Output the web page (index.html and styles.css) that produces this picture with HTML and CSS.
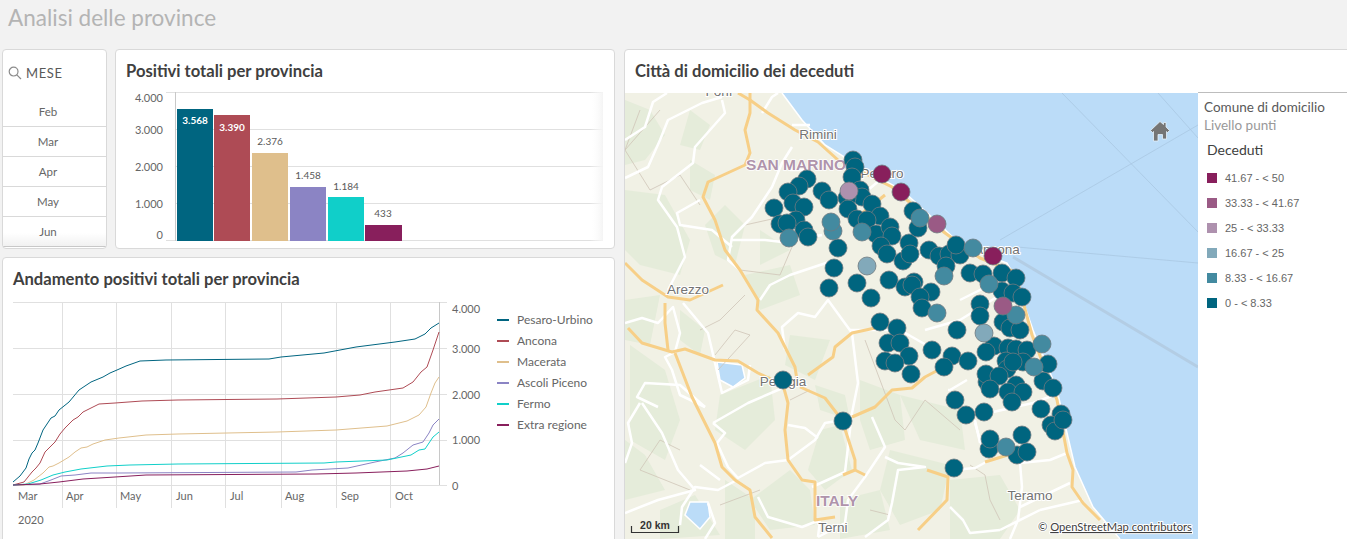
FILE: index.html
```html
<!DOCTYPE html>
<html lang="it">
<head>
<meta charset="utf-8">
<title>Analisi delle province</title>
<link rel="stylesheet" href="styles.css">
</head>
<body>
<header class="topbar"><h1>Analisi delle province</h1></header>
<main class="sheet">
  <div class="left">
    <div class="toprow">
      <section class="card filter">
        <div class="filter-head">
          <svg class="search" viewBox="0 0 14 14"><circle cx="5.6" cy="5.6" r="4.4"/><path d="M8.8 8.8 13 13"/></svg>
          <span>MESE</span>
        </div>
        <ul class="filter-list">
          <li>Feb</li><li>Mar</li><li>Apr</li><li>May</li><li>Jun</li>
        </ul>
      </section>
      <section class="card bars">
        <h2 class="card-title">Positivi totali per provincia</h2>
        <svg class="bar-svg" viewBox="116 92 498 155">
          <defs><linearGradient id="fade"><stop offset="0" stop-color="#fff" stop-opacity="0"/><stop offset="1" stop-color="#f4f4f4"/></linearGradient></defs>
          <g class="grid">
            <path d="M166 92.500H603M176 129.500H603M176 166.500H603M176 203.500H603M166 240.500H603"/>
            <path class="axis" d="M175.500 92V241"/>
          </g>
          <rect x="590" y="92" width="13" height="149" fill="url(#fade)"/>
          <g class="tick">
            <text x="163" y="102">4.000</text><text x="163" y="134">3.000</text><text x="163" y="171">2.000</text><text x="163" y="208">1.000</text><text x="163" y="239">0</text>
          </g>
          <rect class="c1" x="177" y="109" width="36" height="132"/>
          <rect class="c2" x="214" y="115" width="36" height="126"/>
          <rect class="c3" x="252" y="153" width="36" height="88"/>
          <rect class="c4" x="290" y="187" width="36" height="54"/>
          <rect class="c5" x="328" y="197" width="36" height="44"/>
          <rect class="c6" x="365" y="225" width="37" height="16"/>
          <g class="val">
            <text class="in" x="195" y="124">3.568</text><text class="in" x="232" y="131">3.390</text>
            <text x="270" y="145">2.376</text><text x="308" y="179">1.458</text><text x="346" y="190">1.184</text><text x="383" y="217">433</text>
          </g>
        </svg>
      </section>
    </div>
    <section class="card trend">
      <h2 class="card-title trend-title">Andamento positivi totali per provincia</h2>
      <div class="trend-body">
        <svg class="line-svg" viewBox="3 300 490 238">
          <g class="grid">
            <path d="M13 302.500H447M13 348.500H447M13 394.500H447M13 440.500H447M13 485.500H447"/>
            <path d="M62.500 302V508M116.500 302V508M171.500 302V508M225.500 302V508M281.500 302V508M336.500 302V508M390.500 302V508"/>
            <path class="axis" d="M439.500 302V485"/>
          </g>
          <g class="series">
            <path class="s1" d="M13 482 20 476 26 468 29 459 32 453 35 450 38 443 43 430 47 424 51 418 55 416 59 410 64 406 69 402 74 396 79 390 91 382 103 377 110 373 117 370 126 366 140 361 166 360 269 359 281 357 324 353 356 347 395 342 415 339 425 334 431 328 439 323"/>
            <path class="s2" d="M13 485 24 482 32 472 36 468 40 463 45 452 50 447 55 442 60 434 65 428 73 420 78 417 83 412 99 404 115 403 142 401 178 400 277 399 336 397 360 395 375 392 403 388 413 382 421 372 427 367 433 350 439 332"/>
            <path class="s3" d="M13 485 24 485 34 480 43 473 49 467 53 466 59 463 69 457 75 452 81 448 87 447 93 444 105 440 119 438 146 435 178 434 277 432 336 430 387 426 407 421 419 415 426 407 431 393 435 383 439 377"/>
            <path class="s4" d="M13 485 40 484 51 480 61 476 75 475 91 473 119 473 296 472 312 470 348 468 375 462 395 458 403 453 413 445 423 442 429 433 433 425 439 419"/>
            <path class="s5" d="M13 485 28 484 41 480 53 475 65 472 81 469 107 466 130 465 178 464 324 463 336 462 387 460 411 455 419 450 425 449 433 437 439 432"/>
            <path class="s6" d="M13 485 40 484 59 482 83 479 115 477 146 475 316 474 356 473 407 471 427 469 439 466"/>
          </g>
          <g class="tick start">
            <text x="452" y="313">4.000</text><text x="452" y="353">3.000</text><text x="452" y="399">2.000</text><text x="452" y="444">1.000</text><text x="452" y="490">0</text>
          </g>
          <g class="tick start">
            <text x="18" y="500">Mar</text><text x="66" y="500">Apr</text><text x="120" y="500">May</text><text x="176" y="500">Jun</text><text x="230" y="500">Jul</text><text x="285" y="500">Aug</text><text x="341" y="500">Sep</text><text x="395" y="500">Oct</text>
            <text x="18" y="524">2020</text>
          </g>
        </svg>
        <ul class="line-legend">
          <li><i class="sw b1"></i>Pesaro-Urbino</li>
          <li><i class="sw b2"></i>Ancona</li>
          <li><i class="sw b3"></i>Macerata</li>
          <li><i class="sw b4"></i>Ascoli Piceno</li>
          <li><i class="sw b5"></i>Fermo</li>
          <li><i class="sw b6"></i>Extra regione</li>
        </ul>
      </div>
    </section>
  </div>
  <section class="card mapcard">
    <h2 class="card-title map-title">Città di domicilio dei deceduti</h2>
    <div class="map-body">
      <div class="map-wrap">
        <svg class="map" viewBox="625 93 573 446">
          <rect class="land" x="625" y="93" width="573" height="446"/>
          <g class="green">
            <path d="M625 100 650 110 665 135 645 160 625 165Z"/>
            <path d="M625 190 665 195 690 240 680 275 640 265 625 250Z"/>
            <path d="M690 110 710 125 700 150 680 145Z"/>
            <path d="M725 205 745 225 735 265 715 255 705 225Z"/>
            <path d="M745 275 790 265 800 295 760 310Z"/>
            <path d="M625 300 660 295 650 345 625 340Z"/>
            <path d="M630 345 665 370 680 420 665 460 630 440Z"/>
            <path d="M625 440 645 455 665 490 625 500Z"/>
            <path d="M680 310 705 330 700 355 680 340Z"/>
            <path d="M720 395 770 375 775 420 745 450 715 430Z"/>
            <path d="M790 335 830 340 815 380 785 365Z"/>
            <path d="M815 385 845 395 850 420 820 410Z"/>
            <path d="M820 430 840 425 852 470 825 490 808 470Z"/>
            <path d="M790 470 810 490 815 525 770 530 750 500Z"/>
            <path d="M660 510 695 495 720 535 660 539Z"/>
            <path d="M725 480 755 500 755 539 725 539Z"/>
            <path d="M860 380 900 395 905 440 870 450 860 420Z"/>
            <path d="M890 450 950 465 940 510 900 525 880 490Z"/>
            <path d="M950 480 1000 475 1020 510 1000 539 950 539Z"/>
            <path d="M840 500 880 490 890 530 840 539Z"/>
            <path d="M900 395 960 410 965 450 920 440Z"/>
            <path d="M690 160 715 175 710 200 690 190Z"/>
            <path d="M760 230 790 250 760 265Z"/>
          </g>
          <path class="sea" d="M782 93 802 120 825 145 865 170 902 190 935 220 958 242 980 253 1007 263 1017 280 1025 307 1033 330 1057 390 1067 433 1075 467 1093 507 1120 539H1198V93Z"/>
          <path class="coast" d="M782 93 802 120 825 145 865 170 902 190 935 220 958 242 980 253 1007 263 1017 280 1025 307 1033 330 1057 390 1067 433 1075 467 1093 507 1120 539"/>
          <path class="lane" d="M1062 93 1198 232M1158 93 1198 138M1000 240 1198 125M1017 247 1198 263"/>
          <path class="lane dbl" d="M1013 257 1198 367"/>
          <path class="lake" d="M717 362 742 365 745 378 733 387 720 380Z"/>
          <path class="lake" d="M685 515 690 502 708 502 710 517 700 529Z"/>
          <path class="border" d="M625 150 640 110M660 110 625 150 650 190 680 175 700 205M745 225 790 215 815 235M740 270 780 275 795 240M718 370 750 335 735 330 715 355M745 295 720 320 700 330M810 390 790 400M865 340 895 420 905 430 925 400 960 430M970 465 985 475 990 500 1000 520M680 450 660 440 640 470 690 490M760 490 720 505M870 510 890 515"/>
          <g class="wroad">
            <path d="M625 140 645 127 653 102 667 93M625 178 648 167 660 140 668 120 702 103 722 97"/>
            <path d="M722 100 725 113 695 147 693 163 662 187 658 200 677 227 685 257 668 290"/>
            <path d="M700 200 677 213 680 225 712 230 732 247M792 147 782 163 772 187 752 217 732 237 728 260 740 270"/>
            <path d="M732 240 765 240 782 242 822 235M762 113 772 97 778 93M792 125 810 125M835 260 790 275 770 285 760 300"/>
            <path d="M625 323 642 318 658 323 673 307 680 333 675 352 665 357 672 370 680 395 705 407"/>
            <path d="M683 303 708 333 715 363 722 393 748 380 750 365M713 423 748 403 785 387"/>
            <path d="M705 407 680 385 645 383 637 397 658 407M640 403 628 423 632 443 625 463"/>
            <path d="M642 403 662 433 678 470 695 490 658 500 625 513"/>
            <path d="M713 423 725 433 717 443 728 467 738 478 765 463 788 460 815 440 825 423 842 420"/>
            <path d="M788 425 805 428 818 438M737 480 718 490 695 487 682 507 680 525M708 503 715 523 705 539"/>
            <path d="M758 497 768 517 802 527 820 520 818 537M812 487 845 472 852 413 858 383 852 333 828 300 815 317 798 313 782 327 785 350"/>
            <path d="M872 417 885 447 865 477 848 500 845 523 818 537M885 457 898 463 925 467 898 470 892 503 888 520 865 537"/>
            <path d="M953 470 975 468 990 460M975 423 985 457M950 507 963 520 970 533 1000 530"/>
            <path d="M1067 453 1050 460 1020 463 1022 487 1018 520 1010 539M1020 507 1070 483M1040 510 1083 500M1000 530 1040 510"/>
            <path d="M975 420 980 443M993 412 1033 403 1060 393M967 380 950 390 948 390M960 300 1000 280M790 170 810 170M880 180 850 205M700 465 720 480"/>
            <path d="M925 330 960 320 1000 295M900 270 930 250M850 330 900 330 935 350"/>
          </g>
          <g class="yroad">
            <path d="M738 93 750 100 768 113 795 130 818 142 838 160 892 187 945 233 980 258 1015 272 1032 335 1057 400 1067 453 1073 470 1072 487 1083 503 1100 520"/>
            <path d="M750 93 750 113 745 130 750 153 745 165 708 182 703 197 715 220 725 250 740 270 758 300 757 310 778 333 795 367 797 380"/>
            <path d="M628 328 642 343 672 352 685 349 715 360 738 361 758 373 783 385 788 403 785 430 788 460 802 480 815 482 815 520 835 517"/>
            <path d="M800 387 825 398 842 420 855 460 855 470 865 475M855 470 843 475"/>
            <path d="M808 375 833 357 835 347 852 333 875 328M852 417 875 407 892 390 912 388 925 377 942 368"/>
            <path d="M675 353 692 397 715 443 722 467 735 480 750 490 755 517 772 538"/>
            <path d="M927 470 948 477 947 500 918 530M665 303 665 323 668 350M625 263 642 280 668 297 690 300 723 285M1024 450 985 462"/>
            <path d="M860 215 885 195"/>
          </g>
          <g class="place">
            <text x="719" y="96">Forlì</text>
            <text x="818" y="139">Rimini</text>
            <text x="882" y="178">Pesaro</text>
            <text x="997" y="254">Ancona</text>
            <text x="688" y="294">Arezzo</text>
            <text x="783" y="386">Perugia</text>
            <text x="833" y="532">Terni</text>
            <text x="1030" y="500">Teramo</text>
          </g>
          <g class="country">
            <text x="796" y="170">SAN MARINO</text>
            <text x="837" y="506">ITALY</text>
          </g>
          <g class="dots k1">
            <circle cx="853" cy="160" r="9"/><circle cx="855" cy="167" r="9"/><circle cx="807" cy="179" r="9"/><circle cx="799" cy="186" r="9"/><circle cx="788" cy="192" r="9"/><circle cx="793" cy="203" r="9"/><circle cx="804" cy="207" r="9"/><circle cx="822" cy="191" r="9"/><circle cx="829" cy="200" r="9"/><circle cx="774" cy="208" r="9"/><circle cx="796" cy="220" r="9"/><circle cx="780" cy="224" r="9"/><circle cx="787" cy="223" r="9"/><circle cx="804" cy="230" r="9"/><circle cx="808" cy="237" r="9"/><circle cx="852" cy="177" r="9"/><circle cx="860" cy="190" r="9"/><circle cx="862" cy="197" r="9"/><circle cx="847" cy="198" r="9"/><circle cx="848" cy="209" r="9"/><circle cx="872" cy="204" r="9"/><circle cx="880" cy="216" r="9"/><circle cx="857" cy="219" r="9"/><circle cx="867" cy="220" r="9"/><circle cx="876" cy="234" r="9"/><circle cx="890" cy="227" r="9"/><circle cx="892" cy="236" r="9"/><circle cx="881" cy="246" r="9"/><circle cx="887" cy="254" r="9"/><circle cx="903" cy="261" r="9"/><circle cx="909" cy="243" r="9"/><circle cx="910" cy="254" r="9"/><circle cx="913" cy="211" r="9"/><circle cx="918" cy="228" r="9"/><circle cx="929" cy="250" r="9"/><circle cx="939" cy="256" r="9"/><circle cx="949" cy="254" r="9"/><circle cx="960" cy="255" r="9"/><circle cx="956" cy="245" r="9"/><circle cx="946" cy="266" r="9"/><circle cx="838" cy="248" r="9"/><circle cx="834" cy="268" r="9"/><circle cx="829" cy="288" r="9"/><circle cx="857" cy="283" r="9"/><circle cx="889" cy="280" r="9"/><circle cx="871" cy="298" r="9"/><circle cx="905" cy="287" r="9"/><circle cx="914" cy="282" r="9"/><circle cx="912" cy="285" r="9"/><circle cx="931" cy="292" r="9"/><circle cx="920" cy="297" r="9"/><circle cx="922" cy="308" r="9"/><circle cx="970" cy="273" r="9"/><circle cx="983" cy="274" r="9"/><circle cx="1002" cy="273" r="9"/><circle cx="1016" cy="278" r="9"/><circle cx="1002" cy="291" r="9"/><circle cx="1013" cy="293" r="9"/><circle cx="1022" cy="297" r="9"/><circle cx="980" cy="304" r="9"/><circle cx="980" cy="316" r="9"/><circle cx="1003" cy="322" r="9"/><circle cx="1010" cy="328" r="9"/><circle cx="1020" cy="330" r="9"/><circle cx="957" cy="330" r="9"/><circle cx="880" cy="322" r="9"/><circle cx="897" cy="328" r="9"/><circle cx="888" cy="343" r="9"/><circle cx="900" cy="343" r="9"/><circle cx="909" cy="356" r="9"/><circle cx="885" cy="361" r="9"/><circle cx="895" cy="363" r="9"/><circle cx="911" cy="374" r="9"/><circle cx="932" cy="350" r="9"/><circle cx="952" cy="356" r="9"/><circle cx="944" cy="367" r="9"/><circle cx="968" cy="361" r="9"/><circle cx="994" cy="346" r="9"/><circle cx="986" cy="352" r="9"/><circle cx="1008" cy="348" r="9"/><circle cx="1016" cy="349" r="9"/><circle cx="1027" cy="350" r="9"/><circle cx="1006" cy="361" r="9"/><circle cx="1023" cy="362" r="9"/><circle cx="1007" cy="369" r="9"/><circle cx="1013" cy="362" r="9"/><circle cx="1048" cy="364" r="9"/><circle cx="987" cy="382" r="9"/><circle cx="986" cy="374" r="9"/><circle cx="999" cy="376" r="9"/><circle cx="990" cy="389" r="9"/><circle cx="1043" cy="381" r="9"/><circle cx="1053" cy="388" r="9"/><circle cx="1016" cy="385" r="9"/><circle cx="1008" cy="392" r="9"/><circle cx="1023" cy="392" r="9"/><circle cx="1012" cy="402" r="9"/><circle cx="955" cy="400" r="9"/><circle cx="966" cy="415" r="9"/><circle cx="984" cy="412" r="9"/><circle cx="1041" cy="409" r="9"/><circle cx="1061" cy="414" r="9"/><circle cx="1051" cy="425" r="9"/><circle cx="1055" cy="431" r="9"/><circle cx="1063" cy="420" r="9"/><circle cx="1022" cy="435" r="9"/><circle cx="989" cy="449" r="9"/><circle cx="990" cy="439" r="9"/><circle cx="1017" cy="455" r="9"/><circle cx="1027" cy="452" r="9"/><circle cx="954" cy="468" r="9"/><circle cx="843" cy="421" r="9"/><circle cx="783" cy="380" r="9"/>
          </g>
          <g class="dots k2">
            <circle cx="862" cy="232" r="9"/><circle cx="920" cy="218" r="9"/><circle cx="973" cy="248" r="9"/><circle cx="944" cy="276" r="9"/><circle cx="989" cy="284" r="9"/><circle cx="789" cy="238" r="9"/><circle cx="833" cy="231" r="9"/><circle cx="831" cy="222" r="9"/><circle cx="937" cy="313" r="9"/><circle cx="1016" cy="315" r="9"/><circle cx="1042" cy="344" r="9"/><circle cx="1034" cy="367" r="9"/><circle cx="1006" cy="447" r="9"/>
          </g>
          <g class="dots k3"><circle cx="867" cy="266" r="9"/><circle cx="984" cy="333" r="9"/></g>
          <g class="dots k4"><circle cx="849" cy="191" r="9"/></g>
          <g class="dots k5"><circle cx="937" cy="224" r="9"/><circle cx="1003" cy="306" r="9"/></g>
          <g class="dots k6"><circle cx="882" cy="174" r="9"/><circle cx="901" cy="192" r="9"/><circle cx="993" cy="256" r="9"/></g>
          <path class="home" d="M1160 121.500 1150.500 130.500 1152.500 132.500 1153.500 131.500V141H1158V134.500H1162.500V139H1166.500V131.500L1167.500 132.500 1169.500 130.500 1166 127V122.500H1163.500V124.500Z"/>
          <g class="scale">
            <path d="M631.500 526V532.500H678.500V526"/>
            <text x="655" y="529">20 km</text>
          </g>
          <text class="attrib" x="1038" y="531">© <tspan text-decoration="underline">OpenStreetMap contributors</tspan></text>
        </svg>
      </div>
      <aside class="map-legend">
        <p class="lg-dim">Comune di domicilio</p>
        <p class="lg-sub">Livello punti</p>
        <p class="lg-head">Deceduti</p>
        <ul class="lg-list">
          <li><i class="chip k-6"></i>41.67 - &lt; 50</li>
          <li><i class="chip k-5"></i>33.33 - &lt; 41.67</li>
          <li><i class="chip k-4"></i>25 - &lt; 33.33</li>
          <li><i class="chip k-3"></i>16.67 - &lt; 25</li>
          <li><i class="chip k-2"></i>8.33 - &lt; 16.67</li>
          <li><i class="chip k-1"></i>0 - &lt; 8.33</li>
        </ul>
      </aside>
    </div>
  </section>
</main>
</body>
</html>
```
FILE: styles.css
```css
* { box-sizing: border-box; }
html, body { margin: 0; padding: 0; }
body {
  width: 1347px;
  height: 539px;
  overflow: hidden;
  background: #f2f2f2;
  font-family: "Lato", "Open Sans", sans-serif;
  color: #404040;
}
ul { list-style: none; margin: 0; padding: 0; }
p { margin: 0; }
.topbar { height: 49px; padding: 5px 0 0 8px; }
.topbar h1 { margin: 0; font-size: 22.500px; line-height: 26px; font-weight: 400; color: #b4b4b4; }
.sheet { display: flex; gap: 9px; padding-left: 2px; height: 494px; }
.left { width: 613px; display: flex; flex-direction: column; gap: 8px; flex: none; }
.toprow { display: flex; gap: 8px; height: 200px; flex: none; }
.card { background: #fff; border: 1px solid #d9d9d9; border-radius: 4px; overflow: hidden; }
.card-title { margin: 0; font-size: 16.600px; font-weight: 700; color: #404040; line-height: 20px; }

.filter { width: 105px; flex: none; display: flex; flex-direction: column; }
.filter-head { height: 47px; display: flex; align-items: center; gap: 4px; padding: 0 0 2px 5px; font-size: 13px; letter-spacing: 0.6px; color: #595959; }
.search { width: 14px; height: 14px; fill: none; stroke: #8c8c8c; stroke-width: 1.2; }
.filter-list li { height: 30px; line-height: 30px; padding-right: 13px; text-align: center; font-size: 11.500px; color: #666; border-bottom: 1px solid #d9d9d9; }
.filter-list li:last-child { background: linear-gradient(#fff 55%, #f1f1f1); border-bottom-color: #c8c8c8; }

.bars { width: 500px; flex: none; }
.bars .card-title { padding: 11px 0 11px 10px; }
.bar-svg { display: block; width: 498px; height: 155px; }
.grid path { fill: none; stroke: #e0e0e0; stroke-width: 1; }
.grid .axis { stroke: #c8c8c8; }
.tick text { font-size: 11px; fill: #666; text-anchor: end; }
.tick.start text { text-anchor: start; }
.val text { font-size: 10px; fill: #595959; text-anchor: middle; }
.val .in { fill: #fff; font-weight: 700; }
.c1 { fill: #006580; }
.c2 { fill: #ae4b55; }
.c3 { fill: #dfbf8c; }
.c4 { fill: #8b84c4; }
.c5 { fill: #10cfc9; }
.c6 { fill: #881f5c; }

.trend { flex: 1; }
.trend-title { padding: 11px 0 11px 10px; }
.trend-body { display: flex; }
.line-svg { display: block; width: 490px; height: 238px; flex: none; }
.series path { fill: none; stroke-width: 1; }
.s1 { stroke: #006580; }
.s2 { stroke: #ae4b55; }
.s3 { stroke: #dfbf8c; }
.s4 { stroke: #8b84c4; }
.s5 { stroke: #10cfc9; }
.s6 { stroke: #881f5c; }
.line-legend { padding: 9px 0 0 4px; }
.line-legend li { height: 21px; display: flex; align-items: center; gap: 8px; font-size: 12px; color: #666; }
.sw { width: 12px; height: 2px; display: block; }
.b1 { background: #006580; }
.b2 { background: #ae4b55; }
.b3 { background: #dfbf8c; }
.b4 { background: #8b84c4; }
.b5 { background: #10cfc9; }
.b6 { background: #881f5c; }

.mapcard { width: 725px; flex: none; display: flex; flex-direction: column; border-radius: 4px 0 0 0; }
.map-title { height: 43px; padding: 11px 0 0 10px; }
.map-body { display: flex; flex: 1; min-height: 0; }
.map-wrap { width: 573px; flex: none; }
.map { display: block; width: 573px; height: 446px; }
.land { fill: #f1f1e5; }
.green path { fill: #e5ecda; }
.sea { fill: #bbdcf8; }
.coast { fill: none; stroke: #fff; stroke-width: 1.500; }
.lane { fill: none; stroke: #a9c8e2; stroke-width: 0.800; }
.lane.dbl { stroke: #b3cde4; stroke-width: 3; }
.lake { fill: #bbdcf8; stroke: #fff; stroke-width: 1.500; }
.border { fill: none; stroke: #cfc5b8; stroke-width: 0.800; }
.wroad path { fill: none; stroke: #fff; stroke-width: 2.500; stroke-linejoin: round; }
.yroad path { fill: none; stroke: #f7cf87; stroke-width: 3; stroke-linejoin: round; }
.place text { font-family: "Liberation Sans", Arial, sans-serif; font-size: 13.500px; font-weight: 400; fill: #737373; text-anchor: middle; paint-order: stroke; stroke: #fff; stroke-width: 2px; }
.country text { font-family: "Liberation Sans", Arial, sans-serif; font-size: 15.500px; font-weight: 700; fill: #af94ab; text-anchor: middle; paint-order: stroke; stroke: #fff; stroke-width: 1.500px; }
.dots circle { stroke: #6f7a80; stroke-width: 0.800; }
.k1 { fill: #00657f; }
.k2 { fill: #438aa0; }
.k3 { fill: #82a9ba; }
.k4 { fill: #ae91ae; }
.k5 { fill: #9a5a85; }
.k6 { fill: #881f5c; }
.home { fill: #757575; stroke: #e6f1fa; stroke-width: 0.800; }
.scale path { fill: none; stroke: #333; stroke-width: 1.200; }
.scale text { font-family: "Liberation Sans", Arial, sans-serif; font-size: 10.500px; font-weight: 700; fill: #333; text-anchor: middle; }
.attrib { font-size: 11.200px; fill: #404040; paint-order: stroke; stroke: #fff; stroke-width: 2px; }

.map-legend { flex: 1; border-top: 1px solid #bdbdbd; margin-top: -1px; padding: 5px 0 0 6px; }
.lg-dim { font-size: 13.500px; line-height: 18px; color: #595959; }
.lg-sub { font-size: 13.500px; line-height: 18px; color: #999; }
.lg-head { font-size: 14px; line-height: 18px; color: #404040; margin: 7px 0 0 3px; }
.lg-list { margin: 6px 0 0 3px; }
.lg-list li { height: 25px; display: flex; align-items: center; gap: 8px; font-family: "Liberation Sans", Arial, sans-serif; font-size: 11px; color: #666; }
.chip { width: 10px; height: 10px; display: block; }
.k-1 { background: #00657f; }
.k-2 { background: #438aa0; }
.k-3 { background: #82a9ba; }
.k-4 { background: #ae91ae; }
.k-5 { background: #9a5a85; }
.k-6 { background: #881f5c; }
```
